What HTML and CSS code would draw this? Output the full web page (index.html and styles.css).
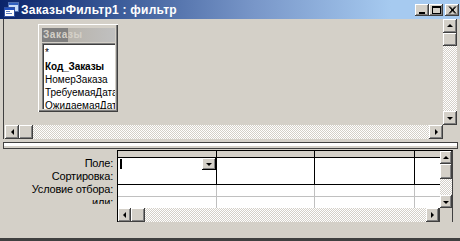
FILE: index.html
```html
<!DOCTYPE html>
<html>
<head>
<meta charset="utf-8">
<link rel="stylesheet" href="styles.css">
</head>
<body>
<div class="window">
  <div class="titlebar">
    <svg class="app-icon" width="16" height="16" viewBox="0 0 16 16">
      <rect x="5.5" y="0.5" width="10" height="9" fill="#c8dcf8" stroke="#5070b0"/>
      <rect x="6" y="1" width="9" height="2" fill="#3060c0"/>
      <rect x="1.5" y="5.5" width="10" height="9" fill="#ffffff" stroke="#3050a0"/>
      <rect x="2" y="6" width="9" height="2" fill="#2050c0"/>
      <rect x="3" y="9" width="4" height="1" fill="#6080c0"/>
      <rect x="3" y="11" width="6" height="1" fill="#6080c0"/>
    </svg>
    <span class="title">ЗаказыФильтр1 : фильтр</span>
    <div class="caption-buttons">
      <div class="cap-btn">
        <svg width="14" height="12" viewBox="0 0 14 12"><rect x="4" y="8" width="6" height="2" fill="#000"/></svg>
      </div>
      <div class="cap-btn">
        <svg width="14" height="12" viewBox="0 0 14 12"><rect x="3.5" y="2.5" width="8" height="7" fill="none" stroke="#000"/><rect x="3" y="2" width="9" height="2" fill="#000"/></svg>
      </div>
      <div class="cap-btn close">
        <svg width="14" height="12" viewBox="0 0 14 12"><path d="M4 2.5 L10 9.5 M5 2.5 L11 9.5 M10 2.5 L4 9.5 M11 2.5 L5 9.5" stroke="#000" stroke-width="1"/></svg>
      </div>
    </div>
  </div>

  <div class="client">
    <div class="upper">
      <div class="canvas">
        <div class="fieldlist">
          <div class="fl-title">Заказы</div>
          <div class="fl-body">
            <div class="fl-item star">*</div>
            <div class="fl-item key">Код_Заказы</div>
            <div class="fl-item">НомерЗаказа</div>
            <div class="fl-item">ТребуемаяДата</div>
            <div class="fl-item">ОжидаемаяДата</div>
          </div>
        </div>
      </div>
      <div class="vscroll">
        <div class="sbtn"><span class="arr up"></span></div>
        <div class="thumb-v"></div>
        <div class="track"></div>
        <div class="sbtn"><span class="arr down"></span></div>
      </div>
      <div class="hscroll">
        <div class="sbtn"><span class="arr left"></span></div>
        <div class="thumb-h"></div>
        <div class="track"></div>
        <div class="sbtn"><span class="arr right"></span></div>
      </div>
      <div class="corner"></div>
    </div>

    <div class="splitter"></div>

    <div class="lower">
      <div class="labels">
        <div class="lbl">Поле:</div>
        <div class="lbl">Сортировка:</div>
        <div class="lbl">Условие отбора:</div>
        <div class="lbl">или:</div>
      </div>
      <div class="qgrid">
        <div class="data">
          <div class="row sel">
            <div class="c c1"></div><div class="c c2"></div><div class="c c3"></div><div class="c c4"></div>
          </div>
          <div class="row top">
            <div class="c c1"><span class="caret"></span><span class="dd"><span class="arr down small"></span></span></div>
            <div class="c c2"></div><div class="c c3"></div><div class="c c4"></div>
          </div>
          <div class="row crit">
            <div class="c c1"></div><div class="c c2"></div><div class="c c3"></div><div class="c c4"></div>
          </div>
          <div class="row or">
            <div class="c c1"></div><div class="c c2"></div><div class="c c3"></div><div class="c c4"></div>
          </div>
        </div>
        <div class="gvscroll">
          <div class="sbtn"><span class="arr up"></span></div>
          <div class="thumb-gv"></div>
          <div class="track"></div>
          <div class="sbtn"><span class="arr down"></span></div>
        </div>
        <div class="ghscroll">
          <div class="sbtn"><span class="arr left"></span></div>
          <div class="thumb-h"></div>
          <div class="track"></div>
          <div class="sbtn"><span class="arr right"></span></div>
        </div>
        <div class="gcorner"></div>
      </div>
    </div>
  </div>
</div>
</body>
</html>
```

FILE: styles.css
```css
* { box-sizing: border-box; }
html, body { margin: 0; padding: 0; }
body {
  width: 460px;
  height: 241px;
  overflow: hidden;
  background: #d4d0c8;
  font-family: "Liberation Sans", Arial, sans-serif;
  font-size: 11px;
  color: #000;
}
.window {
  width: 460px;
  height: 241px;
  display: flex;
  flex-direction: column;
  border-bottom: 3px solid #404040;
}
.titlebar {
  height: 19px;
  flex: none;
  display: flex;
  align-items: center;
  background: linear-gradient(to right, #0a246a 0%, #3a5a98 25%, #7896c8 55%, #a6caf0 85%, #a6caf0 100%);
  padding-left: 3px;
}
.app-icon { flex: none; display: block; }
.title {
  color: #fff;
  font-weight: bold;
  font-size: 12px;
  margin-left: 2px;
  white-space: nowrap;
  letter-spacing: 0.25px;
}
.caption-buttons {
  margin-left: auto;
  display: flex;
  padding-right: 1px;
}
.cap-btn {
  width: 14px;
  height: 12px;
  background: #d4d0c8;
  box-shadow: inset -1px -1px #404040, inset 1px 1px #fff, inset -2px -2px #808080;
}
.cap-btn svg { display: block; }
.cap-btn.close { margin-left: 2px; }

.client {
  flex: 1;
  display: flex;
  flex-direction: column;
  padding-left: 3px;
}

/* upper pane */
.upper {
  height: 120px;
  flex: none;
  display: grid;
  grid-template-columns: 1fr 14px;
  grid-template-rows: 1fr 14px;
  border-left: 1px solid #404040;
  margin-right: 3px;
}
.canvas {
  position: relative;
  background: #d4d0c8;
  overflow: hidden;
}
.fieldlist {
  position: absolute;
  left: 34px;
  top: 5px;
  width: 80px;
  height: 88px;
  background: #d4d0c8;
  box-shadow: inset 1px 1px #fff, inset -1px -1px #404040, inset -2px -2px #808080;
  padding: 4px 3px 3px 4px;
  display: flex;
  flex-direction: column;
}
.fl-title {
  height: 14px;
  flex: none;
  background: linear-gradient(to right, #808080 0%, #808080 35%, #b8b4ac 36%, #c0c0c0 100%);
  color: #d4d0c8;
  font-weight: bold;
  font-size: 10px;
  line-height: 14px;
  padding-left: 1px;
  letter-spacing: 0.6px;
}
.fl-body {
  flex: 1;
  background: #fff;
  margin-top: 1px;
  border-top: 1px solid #808080;
  border-left: 1px solid #808080;
  box-shadow: inset 1px 1px #404040;
  overflow: hidden;
  padding: 3px 0 0 2px;
}
.fl-item {
  height: 13px;
  line-height: 13px;
  white-space: nowrap;
  font-size: 10px;
}
.fl-item.star { font-size: 10px; line-height: 12px; }
.fl-item.key { font-weight: bold; letter-spacing: -0.1px; }

/* scrollbars */
.sbtn {
  flex: none;
  width: 14px;
  height: 14px;
  background: #d4d0c8;
  box-shadow: inset -1px -1px #404040, inset 1px 1px #fff, inset -2px -2px #808080;
  display: flex;
  align-items: center;
  justify-content: center;
}
.track {
  flex: 1;
  background: repeating-conic-gradient(#ffffff 0 25%, #d4d0c8 0 50%) 0 0 / 2px 2px;
}
.arr { width: 0; height: 0; display: block; }
.arr.up { border-left: 3px solid transparent; border-right: 3px solid transparent; border-bottom: 3px solid #000; margin-top: -1px; }
.arr.down { border-left: 3px solid transparent; border-right: 3px solid transparent; border-top: 3px solid #000; margin-top: 1px; }
.arr.left { border-top: 3px solid transparent; border-bottom: 3px solid transparent; border-right: 3px solid #000; }
.arr.right { border-top: 3px solid transparent; border-bottom: 3px solid transparent; border-left: 3px solid #000; }
.arr.small { border-left-width: 3px; border-right-width: 3px; border-top-width: 3px; }

.vscroll {
  display: flex;
  flex-direction: column;
}
.vscroll .sbtn { height: 14px; }
.thumb-v {
  height: 13px;
  flex: none;
  background: #d4d0c8;
  box-shadow: inset -1px -1px #404040, inset 1px 1px #fff, inset -2px -2px #808080;
}
.hscroll {
  display: flex;
  padding-left: 1px;
}
.thumb-h {
  width: 14px;
  flex: none;
  background: #d4d0c8;
  box-shadow: inset -1px -1px #404040, inset 1px 1px #fff, inset -2px -2px #808080;
}
.corner { background: #d4d0c8; }

/* splitter */
.splitter {
  height: 7px;
  flex: none;
  margin: 3px 2px 1px 0;
  border: 1px solid #404040;
  background: #fff;
  box-shadow: inset 0 -2px #d4d0c8;
}

/* lower pane */
.lower {
  flex: 1;
  display: flex;
  align-items: flex-start;
}
.labels {
  width: 114px;
  flex: none;
  margin-top: 7px;
  height: 47px;
  overflow: hidden;
  padding-right: 4px;
}
.lbl {
  height: 13px;
  line-height: 13px;
  text-align: right;
  white-space: nowrap;
  letter-spacing: -0.2px;
}
.qgrid {
  width: 336px;
  height: 72px;
  flex: none;
  display: grid;
  grid-template-columns: 1fr 12px;
  grid-template-rows: 1fr 14px;
  border-left: 1px solid #000;
  border-top: 1px solid #000;
  border-right: 1px solid #404040;
  background: #fff;
}
.data {
  display: flex;
  flex-direction: column;
  overflow: hidden;
}
.row { display: flex; flex: none; }
.c { flex: none; position: relative; }
.c1 { width: 99px; }
.c2 { width: 98px; }
.c3 { width: 100px; }
.c4 { width: 30px; }
.row.sel { height: 7px; background: #d4d0c8; border-bottom: 1px solid #000; }
.row.sel .c { border-right: 1px solid #000; }
.row.top { height: 27px; border-bottom: 1px solid #000; }
.row.top .c { border-right: 1px solid #000; }
.row.crit { height: 12px; border-bottom: 1px solid #c0c0c0; }
.row.crit .c, .row.or .c { border-right: 1px solid #c0c0c0; }
.row.or { height: 12px; }
.caret {
  position: absolute;
  left: 2px;
  top: 1px;
  width: 2px;
  height: 10px;
  background: #000;
}
.dd {
  position: absolute;
  right: 0;
  top: 0;
  width: 14px;
  height: 12px;
  background: #d4d0c8;
  box-shadow: inset -1px -1px #000, inset 1px 1px #fff, inset -2px -2px #808080;
  display: flex;
  align-items: center;
  justify-content: center;
}
.gvscroll {
  display: flex;
  flex-direction: column;
  background: #d4d0c8;
}
.gvscroll .sbtn { width: 12px; height: 13px; }
.thumb-gv {
  height: 15px;
  flex: none;
  background: #d4d0c8;
  box-shadow: inset -1px -1px #404040, inset 1px 1px #fff, inset -2px -2px #808080;
}
.ghscroll {
  display: flex;
  border-right: 1px solid #404040;
}
.ghscroll .sbtn { width: 13px; }
.gcorner { background: #d4d0c8; }
```
